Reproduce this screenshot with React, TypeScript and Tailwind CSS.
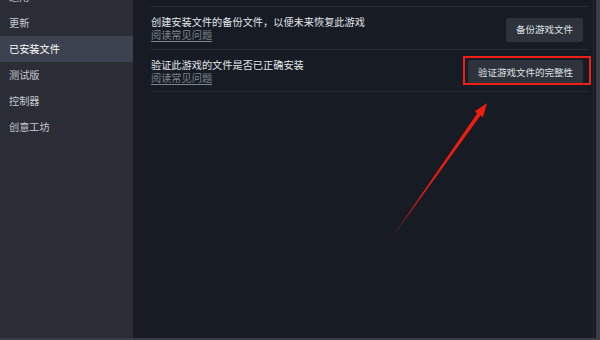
const font = { fontFamily: '"Noto Sans CJK SC", "Noto Sans", sans-serif' };

const navItems = ["通用", "更新", "已安装文件", "测试版", "控制器", "创意工坊"];

function Row(props: { title: string; button: string; highlight?: boolean; last?: boolean }) {
  return (
    <div
      className={
        "flex items-center justify-between border-b border-[#2a2f37] " + (props.last ? "h-[42px]" : "h-[43px]")
      }
    >
      <div className="flex flex-col">
        <span className="text-[10.2px] leading-[13px] text-[#e2e6ea]">{props.title}</span>
        <span className="text-[10.2px] leading-[13px] text-[#7d848d] underline underline-offset-2">阅读常见问题</span>
      </div>
      <div className="relative mr-[5px]">
        <button
          type="button"
          className="h-[24px] px-[10px] bg-[#2e323a] text-[9.5px] text-[#dde1e6] rounded-[2px]"
        >
          {props.button}
        </button>
        {props.highlight ? (
          <div className="absolute -left-[5px] -right-[8px] -top-[1px] -bottom-[1px] border-2 border-[#ee1f16]" />
        ) : null}
      </div>
    </div>
  );
}

export default function App() {
  return (
    <div className="relative w-[600px] h-[340px] overflow-hidden flex bg-[#171c24] border-r-4 border-b-2 border-[#3a3d44]" style={font}>
      <div className="w-[133px] shrink-0 bg-[#2a2d35] flex flex-col -mt-[16px]">
        {navItems.map((item) => (
          <div
            key={item}
            className={
              "h-[26px] flex items-center pl-[9px] text-[10.2px] " +
              (item === "已安装文件" ? "bg-[#3c4250] text-white" : "text-[#c3c8ce]")
            }
          >
            {item}
          </div>
        ))}
      </div>
      <div className="flex-1 pl-[18px] pr-[5px] pt-[6px]">
        <div className="border-t border-[#2a2f37]">
          <Row title="创建安装文件的备份文件，以便未来恢复此游戏" button="备份游戏文件" />
          <Row title="验证此游戏的文件是否已正确安装" button="验证游戏文件的完整性" highlight last />
        </div>
      </div>
      <div className="w-[3px] shrink-0 border-l border-[#252a32] bg-[#14181f]" />
      <svg className="absolute inset-0 pointer-events-none" width="600" height="340" viewBox="0 0 600 340">
        <polygon
          points="393,236 477.3,113.2 474.8,111.5 487,103 483,117.3 480.5,115.6"
          fill="#f01c10"
        />
      </svg>
    </div>
  );
}
